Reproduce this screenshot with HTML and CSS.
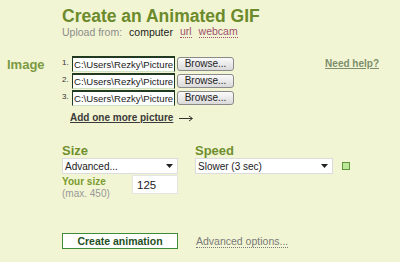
FILE: index.html
```html
<!DOCTYPE html>
<html>

<head>
    <title>Create an Animated GIF</title>

    <!-- For styling -->
    <link rel="stylesheet" href="styles.css">
</head>

<body>

    <!-- Header -->
    <div class="header">
        <h1 class="title">Create an Animated GIF</h1>
        <div class="upload">
            <span class="upload-label">Upload from:</span>
            <span class="source current">computer</span>
            <a class="source link" href="#">url</a>
            <a class="source link" href="#">webcam</a>
        </div>
    </div>

    <!-- Pictures -->
    <div class="image-section">
        <div class="section-label">Image</div>
        <div class="files">
            <div class="file-row">
                <span class="file-num">1.</span>
                <div class="file-box">C:\Users\Rezky\Picture</div>
                <div class="browse">Browse...</div>
            </div>
            <div class="file-row">
                <span class="file-num">2.</span>
                <div class="file-box">C:\Users\Rezky\Picture</div>
                <div class="browse">Browse...</div>
            </div>
            <div class="file-row">
                <span class="file-num">3.</span>
                <div class="file-box">C:\Users\Rezky\Picture</div>
                <div class="browse">Browse...</div>
            </div>
            <a class="add-more" href="#">
                <span class="add-text">Add one more picture</span>
                <svg class="arrow" width="15" height="7" viewBox="0 0 15 7"><path d="M0 3.5h13M10 1l3.5 2.5L10 6" stroke="#333" fill="none"/></svg>
            </a>
        </div>
        <a class="help" href="#">Need help?</a>
    </div>

    <!-- Options -->
    <div class="options">
        <div class="option size">
            <div class="option-title">Size</div>
            <div class="select size-select">
                <span>Advanced...</span>
                <svg width="7" height="4" viewBox="0 0 7 4"><path d="M0 0h7L3.5 4z" fill="#222"/></svg>
            </div>
            <div class="your-size">
                <div class="your-size-text">
                    <div class="your-size-label">Your size</div>
                    <div class="max">(max. 450)</div>
                </div>
                <div class="size-input">125</div>
            </div>
        </div>
        <div class="option speed">
            <div class="option-title">Speed</div>
            <div class="speed-row">
                <div class="select speed-select">
                    <span>Slower (3 sec)</span>
                    <svg width="7" height="4" viewBox="0 0 7 4"><path d="M0 0h7L3.5 4z" fill="#222"/></svg>
                </div>
                <span class="speed-box"></span>
            </div>
        </div>
    </div>

    <!-- Actions -->
    <div class="actions">
        <div class="create">Create animation</div>
        <a class="advanced" href="#">Advanced options...</a>
    </div>

</body>

</html>
```

FILE: styles.css
```css
body {
    margin: 0;
    background-color: #f2f5d3;
    font-family: "Liberation Sans", Arial, sans-serif;
    color: #222;
}

a {
    text-decoration: none;
}

.header {
    margin-left: 62px;
    padding-top: 7px;
}

.title {
    margin: 0;
    font-size: 17.5px;
    line-height: 19px;
    font-weight: bold;
    color: #6b8a2b;
}

.upload {
    display: flex;
    align-items: flex-start;
    font-size: 10.5px;
    line-height: 12px;
}

.upload-label {
    color: #8c8c8c;
    margin-right: 7px;
}

.source {
    margin-right: 7px;
}

.current {
    color: #222;
}

.link {
    color: #a0506e;
    border-bottom: 1px dotted #a0506e;
    line-height: 11px;
}

.image-section {
    display: flex;
    align-items: flex-start;
    margin-top: 18px;
    padding-right: 21px;
}

.section-label {
    box-sizing: border-box;
    width: 62px;
    padding-left: 7px;
    margin-top: 1px;
    font-size: 13px;
    line-height: 16px;
    font-weight: bold;
    color: #7a9a42;
}

.files {
    display: flex;
    flex-direction: column;
    gap: 1px;
}

.file-row {
    display: flex;
    align-items: flex-start;
    height: 16px;
}

.file-num {
    width: 10px;
    font-size: 8px;
    line-height: 13px;
    color: #333;
}

.file-box {
    box-sizing: border-box;
    width: 103px;
    height: 16px;
    background-color: #fff;
    border: 1px solid #223a22;
    border-top-width: 2px;
    border-bottom-color: #cfe3c3;
    font-size: 9.6px;
    line-height: 13px;
    padding-left: 1px;
    white-space: nowrap;
    overflow: hidden;
}

.browse {
    box-sizing: border-box;
    width: 57px;
    height: 14px;
    margin: 1px 0 0 2px;
    background: linear-gradient(#fafafa, #dadada);
    border: 1px solid #8a8a8a;
    border-radius: 3px;
    font-size: 10px;
    line-height: 12px;
    text-align: center;
    color: #222;
}

.add-more {
    display: flex;
    align-items: center;
    margin: 5px 0 0 8px;
    font-size: 10px;
    line-height: 12px;
    font-weight: bold;
    color: #3a3a3a;
}

.add-text {
    text-decoration: underline;
}

.arrow {
    margin-left: 6px;
}

.help {
    margin-left: auto;
    margin-top: 2px;
    font-size: 10px;
    line-height: 12px;
    font-weight: bold;
    color: #7e8e6c;
    text-decoration: underline;
}

.options {
    display: flex;
    margin: 19px 0 0 62px;
}

.option-title {
    font-size: 13px;
    line-height: 15px;
    font-weight: bold;
    color: #6f8f2f;
}

.size {
    width: 133px;
}

.select {
    box-sizing: border-box;
    display: flex;
    align-items: center;
    justify-content: space-between;
    height: 16px;
    padding: 0 4px 0 2px;
    background-color: #fff;
    border: 1px solid #dcdcdc;
    font-size: 10px;
}

.size-select {
    width: 116px;
}

.your-size {
    display: flex;
    width: 116px;
    margin-top: 1px;
}

.your-size-text {
    padding-top: 1px;
    font-size: 10px;
    line-height: 12px;
}

.your-size-label {
    font-weight: bold;
    color: #7a9a30;
}

.max {
    color: #999;
}

.size-input {
    box-sizing: border-box;
    margin-left: auto;
    width: 46px;
    height: 19px;
    padding: 2px 0 0 4px;
    background-color: #fff;
    border: 1px solid #e4e4e4;
    font-size: 11.5px;
    line-height: 14px;
}

.speed-row {
    display: flex;
    align-items: center;
}

.speed-select {
    width: 138px;
}

.speed-box {
    box-sizing: border-box;
    width: 8px;
    height: 8px;
    margin-left: 9px;
    background-color: #bfe79a;
    border: 1px solid #5a9a3a;
}

.actions {
    display: flex;
    align-items: center;
    margin: 33px 0 0 62px;
}

.create {
    box-sizing: border-box;
    width: 116px;
    height: 16px;
    background-color: #fff;
    border: 1px solid #3c8c3c;
    font-size: 10.5px;
    line-height: 14px;
    font-weight: bold;
    text-align: center;
    color: #1e4f1e;
}

.advanced {
    margin-left: 18px;
    font-size: 10.5px;
    line-height: 12px;
    color: #7a7a7a;
    border-bottom: 1px dotted #7a7a7a;
}
```
